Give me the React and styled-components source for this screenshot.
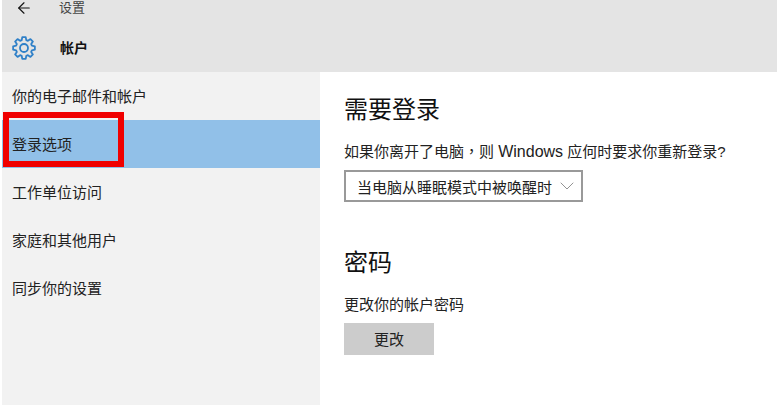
import React from "react";
import styled, { createGlobalStyle } from "styled-components";
import { ArrowLeft, ChevronDown } from "lucide-react";

const Global = createGlobalStyle`
  html, body { margin: 0; padding: 0; background: #fff; }
  body { font-family: "Liberation Sans", "Noto Sans CJK SC", sans-serif; color: #1a1a1a; }
`;

const Page = styled.div`
  position: relative;
  width: 782px;
  height: 405px;
  overflow: hidden;
  padding: 0 5px 0 2px;
  box-sizing: border-box;
`;

const Header = styled.header`
  height: 72px;
  background: #e4e4e4;
  display: flex;
  flex-direction: column;
`;

const TopRow = styled.div`
  height: 16px;
  display: flex;
  align-items: center;
  padding-left: 13px;
`;

const BackIcon = styled(ArrowLeft)`
  width: 18px;
  height: 18px;
  color: #111;
  stroke-width: 1.5;
`;

const TopTitle = styled.span`
  margin-left: 26px;
  margin-top: -1px;
  font-size: 13px;
  line-height: 14px;
  color: #444;
`;

const TitleRow = styled.div`
  margin-top: 19px;
  height: 26px;
  display: flex;
  align-items: center;
  padding-left: 10px;
`;

const GearSvg = styled.svg`
  width: 24px;
  height: 24px;
  flex: none;
  fill: none;
  stroke: #2f80c8;
  stroke-width: 1.8;
  stroke-linejoin: round;
`;

const PageTitle = styled.h1`
  margin: 0 0 0 24px;
  font-size: 14px;
  line-height: 20px;
  font-weight: 700;
  color: #111;
`;

const Body = styled.div`
  display: flex;
  height: 333px;
`;

const Sidebar = styled.nav`
  width: 318px;
  background: #f2f2f2;
  display: flex;
  flex-direction: column;
`;

const NavItem = styled.div`
  height: 48px;
  box-sizing: border-box;
  display: flex;
  align-items: center;
  padding: 0 0 2px 10px;
  font-size: 15px;
  color: #222;
  background: ${(p) => (p.$active ? "#91c0e8" : "transparent")};
`;

const Main = styled.main`
  flex: 1;
  padding: 20px 0 0 24px;
  background: #fff;
`;

const Heading = styled.h2`
  margin: ${(p) => p.$top || 0}px 0 0;
  font-size: 24px;
  line-height: 36px;
  font-weight: 400;
  color: #111;
`;

const Label = styled.p`
  margin: 14px 0 8px;
  height: 20px;
  font-size: 15px;
  line-height: 20px;
  color: #222;
  white-space: nowrap;
`;

const Comma = styled.span`
  font-family: "Noto Sans CJK TC", sans-serif;
  line-height: 0;
`;

const Latin = styled.span`
  font-size: 16px;
  line-height: 0;
`;

const Select = styled.div`
  width: 239px;
  height: 32px;
  box-sizing: border-box;
  border: 2px solid #999;
  display: flex;
  align-items: center;
  justify-content: space-between;
  padding: 0 2px 0 11px;
  font-size: 15px;
  color: #222;
  white-space: nowrap;
`;

const Chevron = styled(ChevronDown)`
  width: 24px;
  height: 24px;
  color: #777;
  stroke-width: 0.8;
  flex: none;
`;

const Button = styled.button`
  display: block;
  width: 90px;
  height: 32px;
  border: 0;
  padding: 0 0 1px;
  background: #ccc;
  font: inherit;
  font-size: 15px;
  color: #222;
`;

const Highlight = styled.div`
  position: absolute;
  left: 3px;
  top: 112px;
  width: 121px;
  height: 55px;
  box-sizing: border-box;
  border: 6px solid #f00000;
`;

const items = ["你的电子邮件和帐户", "登录选项", "工作单位访问", "家庭和其他用户", "同步你的设置"];

function gearPath(teeth = 8, outer = 11, inner = 8.2, cx = 12, cy = 12) {
  const step = (Math.PI * 2) / teeth;
  const pts = [];
  for (let i = 0; i < teeth; i++) {
    const a = i * step - Math.PI / 2;
    const at = (r, d) => [cx + r * Math.cos(a + d * step), cy + r * Math.sin(a + d * step)];
    pts.push(at(inner, -0.36), at(outer, -0.2), at(outer, 0.2), at(inner, 0.36));
  }
  return "M" + pts.map((p) => p.map((n) => n.toFixed(2)).join(" ")).join("L") + "Z";
}

function Gear() {
  return (
    <GearSvg viewBox="0 0 24 24">
      <path d={gearPath()} />
      <circle cx="12" cy="12" r="4" />
    </GearSvg>
  );
}

export default function App() {
  return (
    <Page>
      <Global />
      <Header>
        <TopRow>
          <BackIcon />
          <TopTitle>设置</TopTitle>
        </TopRow>
        <TitleRow>
          <Gear />
          <PageTitle>帐户</PageTitle>
        </TitleRow>
      </Header>
      <Body>
        <Sidebar>
          {items.map((t, i) => (
            <NavItem key={t} $active={i === 1}>{t}</NavItem>
          ))}
        </Sidebar>
        <Main>
          <Heading>需要登录</Heading>
          <Label>
            如果你离开了电脑<Comma lang="zh-TW">，</Comma>则 <Latin>Windows</Latin> 应何时要求你重新登录?
          </Label>
          <Select>
            <span>当电脑从睡眠模式中被唤醒时</span>
            <Chevron />
          </Select>
          <Heading $top={43}>密码</Heading>
          <Label>更改你的帐户密码</Label>
          <Button>更改</Button>
        </Main>
      </Body>
      <Highlight />
    </Page>
  );
}
